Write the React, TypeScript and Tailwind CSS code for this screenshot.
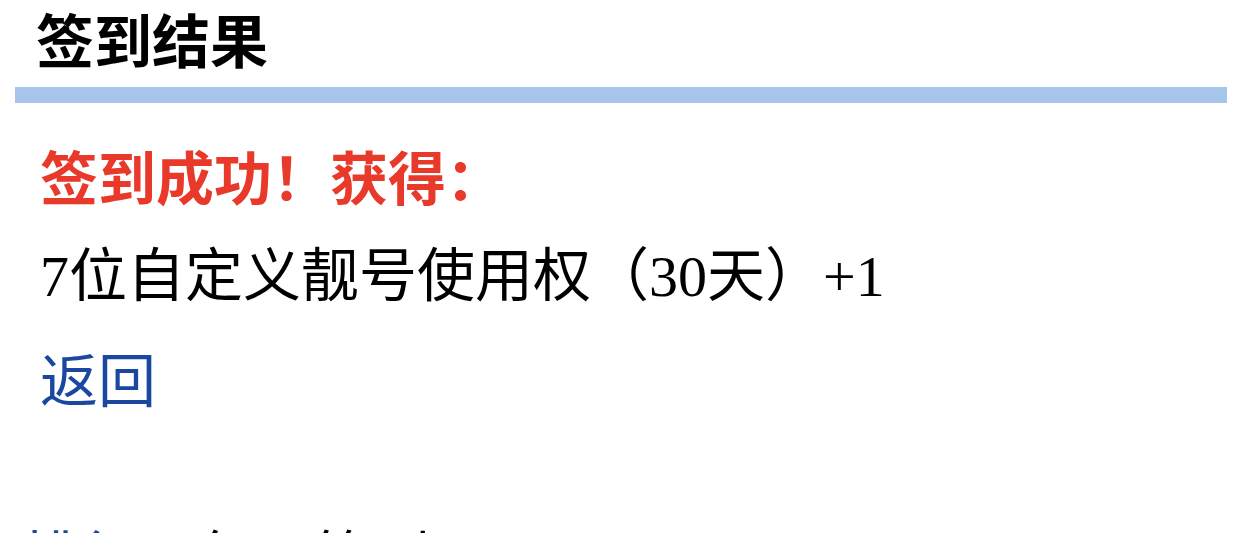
import React from 'react';

const sans = { fontFamily: '"Noto Sans CJK SC", "Noto Sans", sans-serif' };

export default function App() {
  return (
    <div className="min-h-screen bg-white px-[15px] text-black" style={sans}>
      {/* header */}
      <h2 className="pl-[21px] text-[58px] font-bold leading-[76px]">签到结果</h2>
      <div className="mt-[11px] h-[16px] bg-[#a6c5e8]" />

      {/* result */}
      <div className="mt-[22px] pl-[25px]">
        <p className="text-[58px] font-bold leading-[101px] text-[#e8392a]">签到成功！获得：</p>
        <p
          className="text-[58px] leading-[101px]"
          style={{ fontFamily: '"Liberation Serif", "Noto Sans CJK SC", serif' }}
        >
          7位自定义靓号使用权（30天）+1
        </p>
        <p className="text-[58px] leading-[101px]">
          <a href="#" className="text-[#1a48a0]">返回</a>
        </p>
      </div>

      {/* footer nav, cut off by the window */}
      <div className="mt-[76px] pl-[7px] text-[58px] leading-[101px]">
        <a href="#" className="text-[#1a48a0]">排行</a>
        <span className="ml-[60px]">每日签到</span>
      </div>
    </div>
  );
}
